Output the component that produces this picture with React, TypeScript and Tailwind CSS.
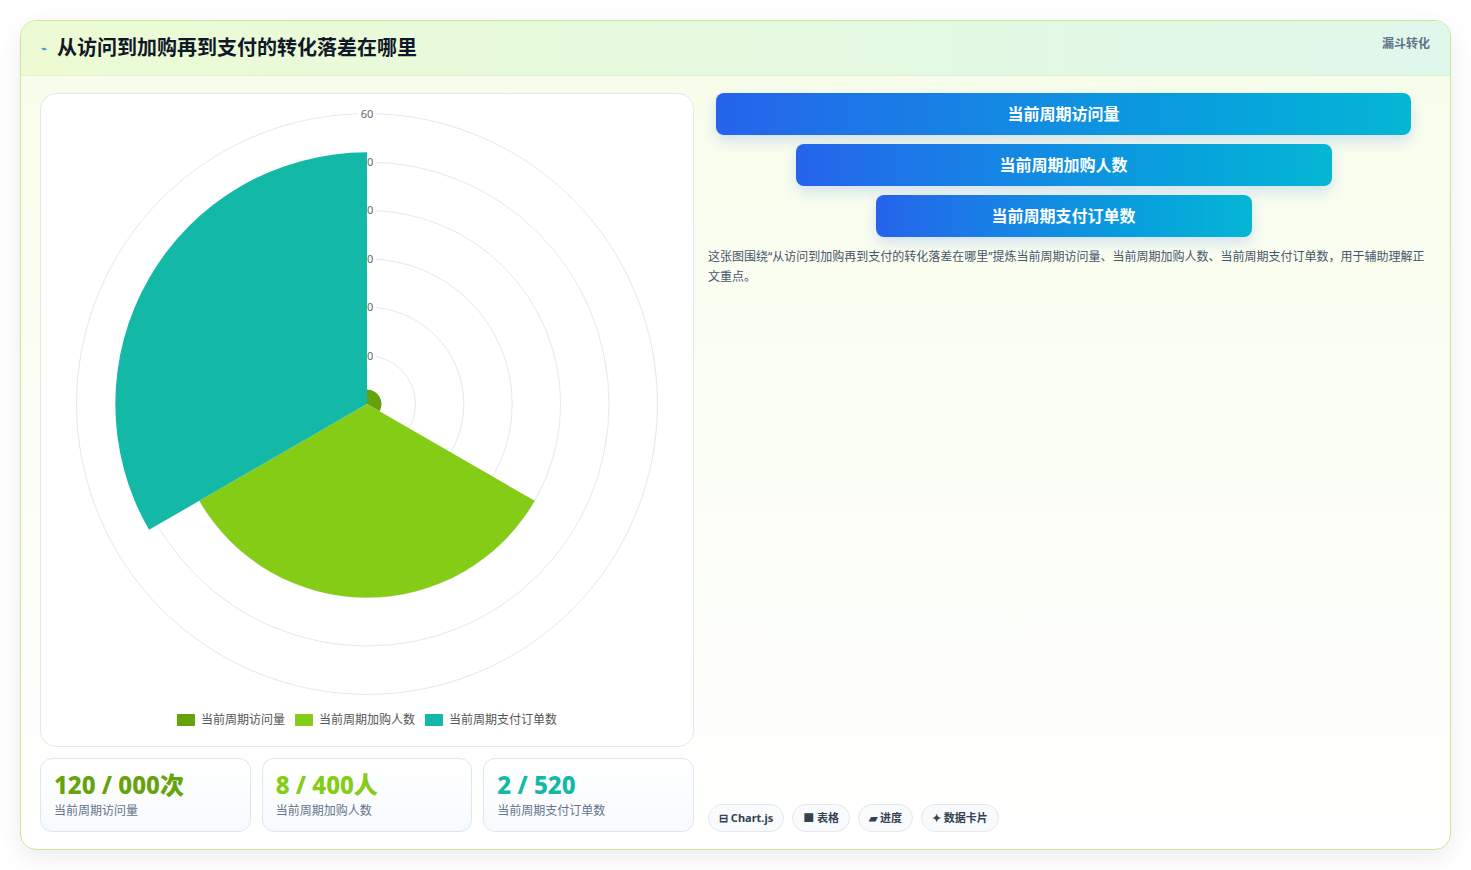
import React from "react";

const cx = 326, cy = 310, k = 4.84;
function arc(r: number, a0: number, a1: number) {
  const rad = (d: number) => (d * Math.PI) / 180;
  const x0 = cx + r * Math.cos(rad(a0)), y0 = cy + r * Math.sin(rad(a0));
  const x1 = cx + r * Math.cos(rad(a1)), y1 = cy + r * Math.sin(rad(a1));
  return `M${cx} ${cy} L${x0} ${y0} A${r} ${r} 0 0 1 ${x1} ${y1} Z`;
}

export default function App() {
  const font = { fontFamily: '"Noto Sans","Noto Sans CJK SC",sans-serif' };
  return (
    <div className="w-[1471px] h-[870px] bg-white p-[20px] pb-[20px]" style={font}>
      <div className="h-[830px] rounded-2xl border border-[#c7e89a] shadow-[0_8px_24px_rgba(0,0,0,0.08)] overflow-hidden flex flex-col bg-gradient-to-b from-[#f7fdea] to-white">
        <div className="h-[55px] shrink-0 flex items-center justify-between px-[20px] border-b border-[#e2efd0] bg-gradient-to-r from-[#ecfbd3] to-[#e0f8ec]">
          <div className="flex items-center gap-[10px]">
            <span className="text-[#2563eb] text-[10px]">⌁</span>
            <span className="text-[20px] font-bold text-[#111827]">从访问到加购再到支付的转化落差在哪里</span>
          </div>
          <span className="text-[12px] font-bold text-[#64748b] self-start mt-[14px]">漏斗转化</span>
        </div>
        <div className="flex-1 flex gap-[14px] px-[19px] pt-[17px] pb-[18px]">
          <div className="w-[654px] flex flex-col gap-[11px]">
            <div className="h-[654px] bg-white rounded-2xl border border-[#e5e7eb] relative">
              <svg width="652" height="652" className="absolute left-0 top-0">
                {[1, 2, 3, 4, 5, 6].map((i) => (
                  <circle key={i} cx={cx} cy={cy} r={i * 10 * k} fill="none" stroke="#e5e7eb" strokeWidth="1" />
                ))}
                {[1, 2, 3, 4, 5, 6].map((i) => (
                  <g key={"l" + i}>
                    <rect x={cx - 9} y={cy - i * 10 * k - 7} width="18" height="13" fill="white" />
                    <text x={cx} y={cy - i * 10 * k + 4} fontSize="11" fill="#666" textAnchor="middle">{i * 10}</text>
                  </g>
                ))}
                <path d={arc(3 * k, -90, 30)} fill="#65a30d" />
                <path d={arc(40 * k, 30, 150)} fill="#84cc16" />
                <path d={arc(52 * k, 150, 270)} fill="#14b8a6" />
              </svg>
              <div className="absolute left-0 right-0 top-[617px] flex justify-center gap-[10px] text-[12px] text-[#555]">
                {[["#65a30d", "当前周期访问量"], ["#84cc16", "当前周期加购人数"], ["#14b8a6", "当前周期支付订单数"]].map(([c, t]) => (
                  <div key={t} className="flex items-center gap-[6px]">
                    <span className="w-[18px] h-[12px]" style={{ background: c }} />
                    <span>{t}</span>
                  </div>
                ))}
              </div>
            </div>
            <div className="grid grid-cols-3 gap-[11px]">
              {[["120 / 000次", "#65a30d", "当前周期访问量"], ["8 / 400人", "#84cc16", "当前周期加购人数"], ["2 / 520", "#14b8a6", "当前周期支付订单数"]].map(([v, c, l]) => (
                <div key={l} className="h-[74px] rounded-xl border border-[#dbe7f5] bg-gradient-to-b from-white to-[#f7fafd] px-[13px] pt-[9px]">
                  <div className="text-[24px] font-extrabold leading-[34px]" style={{ color: c }}>{v}</div>
                  <div className="text-[12px] text-[#64748b] leading-[18px]">{l}</div>
                </div>
              ))}
            </div>
          </div>
          <div className="flex-1 flex flex-col">
            <div className="flex flex-col items-center gap-[9px] pt-0 pr-[12px]">
              {[["695px", "当前周期访问量"], ["536px", "当前周期加购人数"], ["376px", "当前周期支付订单数"]].map(([w, t]) => (
                <div key={t} className="h-[42px] rounded-lg bg-gradient-to-r from-[#2563eb] to-[#06b6d4] text-white font-bold text-[16px] flex items-center justify-center shadow-[0_6px_14px_rgba(37,99,235,0.18)]" style={{ width: w }}>{t}</div>
              ))}
            </div>
            <p className="mt-[10px] text-[12px] leading-[20px] text-[#475569] pr-[4px]">这张图围绕“从访问到加购再到支付的转化落差在哪里”提炼当前周期访问量、当前周期加购人数、当前周期支付订单数，用于辅助理解正文重点。</p>
            <div className="mt-auto flex gap-[8px]">
              {["⊟ Chart.js", "■ 表格", "▰ 进度", "✦ 数据卡片"].map((t) => (
                <span key={t} className="h-[28px] px-[10px] rounded-full border border-[#e2e8f0] bg-[#f8fafc] text-[11px] font-bold text-[#334155] flex items-center">{t}</span>
              ))}
            </div>
          </div>
        </div>
      </div>
    </div>
  );
}
